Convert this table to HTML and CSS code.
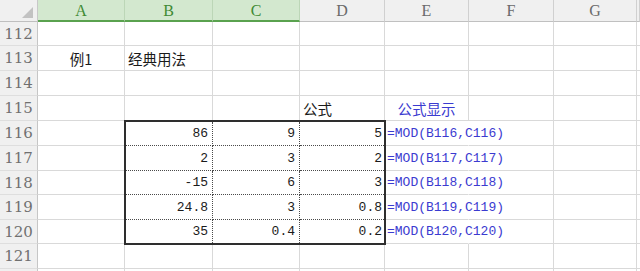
FILE: index.html
```html
<!DOCTYPE html>
<html lang="zh-CN">
<head>
<meta charset="utf-8">
<title>MOD</title>
<link rel="stylesheet" href="styles.css">
</head>
<body>
<div class="sheet">
  <div class="corner"><span class="tri"></span></div>
  <div class="ch sel">A</div><div class="ch sel">B</div><div class="ch sel">C</div>
  <div class="ch">D</div><div class="ch">E</div><div class="ch">F</div><div class="ch">G</div><div class="ch"></div>

  <div class="rh">112</div><div class="c"></div><div class="c"></div><div class="c"></div><div class="c"></div><div class="c"></div><div class="c"></div><div class="c"></div><div class="c"></div>
  <div class="rh">113</div><div class="c cj center">例1</div><div class="c cj">经典用法</div><div class="c"></div><div class="c"></div><div class="c"></div><div class="c"></div><div class="c"></div><div class="c"></div>
  <div class="rh">114</div><div class="c"></div><div class="c"></div><div class="c"></div><div class="c"></div><div class="c"></div><div class="c"></div><div class="c"></div><div class="c"></div>
  <div class="rh">115</div><div class="c"></div><div class="c"></div><div class="c"></div><div class="c cj">公式</div><div class="c cj center blue">公式显示</div><div class="c"></div><div class="c"></div><div class="c"></div>

  <div class="rh">116</div><div class="c"></div><div class="c fx">=MOD(B116,C116)</div><div class="c"></div><div class="c"></div><div class="c"></div>
  <div class="rh">117</div><div class="c"></div><div class="c fx">=MOD(B117,C117)</div><div class="c"></div><div class="c"></div><div class="c"></div>
  <div class="rh">118</div><div class="c"></div><div class="c fx">=MOD(B118,C118)</div><div class="c"></div><div class="c"></div><div class="c"></div>
  <div class="rh">119</div><div class="c"></div><div class="c fx">=MOD(B119,C119)</div><div class="c"></div><div class="c"></div><div class="c"></div>
  <div class="rh">120</div><div class="c"></div><div class="c fx">=MOD(B120,C120)</div><div class="c"></div><div class="c"></div><div class="c"></div>

  <div class="rh">121</div><div class="c"></div><div class="c"></div><div class="c"></div><div class="c"></div><div class="c"></div><div class="c"></div><div class="c"></div><div class="c"></div>
  <div class="rh tail"></div><div class="c tail"></div><div class="c tail"></div><div class="c tail"></div><div class="c tail"></div><div class="c tail"></div><div class="c tail"></div><div class="c tail"></div><div class="c tail"></div>

  <div class="block">
    <div class="n">86</div><div class="n">9</div><div class="n last">5</div>
    <div class="n">2</div><div class="n">3</div><div class="n last">2</div>
    <div class="n">-15</div><div class="n">6</div><div class="n last">3</div>
    <div class="n">24.8</div><div class="n">3</div><div class="n last">0.8</div>
    <div class="n">35</div><div class="n">0.4</div><div class="n last">0.2</div>
  </div>
</div>
</body>
</html>
```

FILE: styles.css
```css
* { box-sizing: border-box; }
html, body {
  margin: 0;
  padding: 0;
  background: #ffffff;
  overflow: hidden;
}
.sheet {
  display: grid;
  grid-template-columns: 38px 87px 88px 87px 85px 84px 85px 83px 3px;
  grid-template-rows: 22px 24px 25px 25px 25px 25px 25px 24px 25px 24px 25px 3px;
  width: 640px;
  height: 271px;
  overflow: hidden;
}
.corner {
  background: #f0f0f0;
  border-right: 1px solid #c8c8c8;
  border-bottom: 1px solid #bfbfbf;
  position: relative;
}
.tri {
  position: absolute;
  left: 22px;
  top: 7px;
  width: 0;
  height: 0;
  border-left: 11px solid transparent;
  border-bottom: 11px solid #c2c2c2;
}
.ch {
  background: #f0f0f0;
  border-right: 1px solid #d0d0d0;
  border-bottom: 1px solid #c0c0c0;
  color: #6a6a6a;
  font-family: "Liberation Serif", serif;
  font-size: 16px;
  display: flex;
  align-items: center;
  justify-content: center;
  padding-top: 1px;
}
.ch.sel {
  background: #d3e8cf;
  color: #3f8a34;
  border-right-color: #bcd6b7;
  border-bottom: 2px solid #5aa24f;
  padding-top: 2px;
}
.rh {
  background: #f0f0f0;
  border-right: 1px solid #c6c6c6;
  border-bottom: 1px solid #dedede;
  color: #707070;
  font-family: "DejaVu Serif", serif;
  font-size: 15px;
  display: flex;
  align-items: center;
  justify-content: center;
}
.c {
  border-right: 1px solid #d9d9d9;
  border-bottom: 1px solid #d9d9d9;
  display: flex;
  align-items: center;
  padding: 0 3px;
  white-space: nowrap;
  color: #1a1a1a;
}
.tail { border-bottom: none; }
.cj {
  font-family: "Noto Sans CJK SC", sans-serif;
  font-size: 14.5px;
  padding-left: 3px;
}
.center { justify-content: center; }
.blue { color: #3b3bd0; }
.fx {
  font-family: "Liberation Mono", monospace;
  font-size: 13px;
  color: #3b3bd0;
  padding-left: 2px;
  border-right-color: transparent;
}
.block {
  grid-column: 3 / 6;
  grid-row: 6 / 11;
  margin: -1px;
  border: 2px solid #2e2e2e;
  background: #ffffff;
  display: grid;
  grid-template-columns: 87px 87px 84px;
  grid-template-rows: 24px 25px 24px 25px 23px;
}
.n {
  border-right: 1px dotted #4a4a4a;
  border-bottom: 1px dotted #4a4a4a;
  display: flex;
  align-items: center;
  justify-content: flex-end;
  padding-right: 4px;
  font-family: "Liberation Mono", monospace;
  font-size: 13px;
  color: #1a1a1a;
}
.n.last {
  border-right: none;
  padding-right: 2px;
}
.n:nth-last-child(-n+3) { border-bottom: none; }
```
